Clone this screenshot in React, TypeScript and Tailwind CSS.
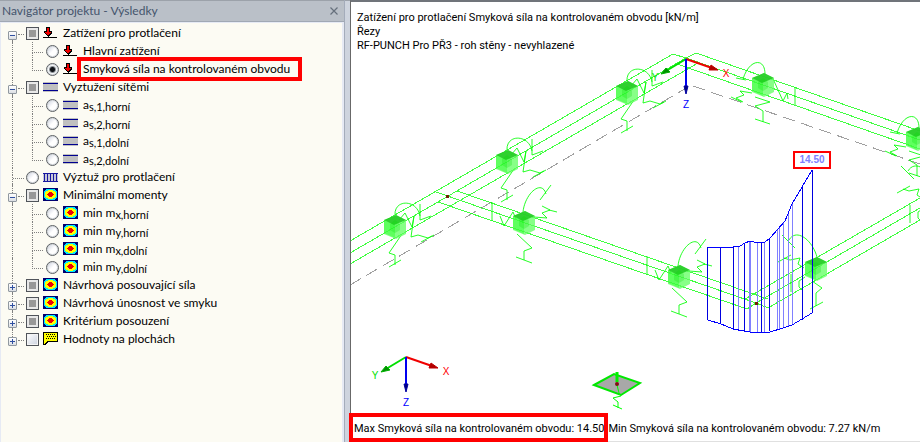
import { useState } from "react";
import type { ReactNode } from "react";

type IconKind = "load" | "mesh" | "stirrups" | "contour" | "values";

interface ResultItem {
  id: string;
  label: string;
  sub?: string;
  icon: IconKind;
}

interface ResultGroup extends ResultItem {
  state: "partial" | "off" | "radio";
  expanded?: boolean;
  items?: ResultItem[];
}

const groups: ResultGroup[] = [
  {
    id: "load",
    label: "Zatížení pro protlačení",
    icon: "load",
    state: "partial",
    expanded: true,
    items: [
      { id: "main-load", label: "Hlavní zatížení", icon: "load" },
      { id: "shear", label: "Smyková síla na kontrolovaném obvodu", icon: "load" },
    ],
  },
  {
    id: "mesh",
    label: "Vyztužení sítěmi",
    icon: "mesh",
    state: "partial",
    expanded: true,
    items: [
      { id: "as1-top", label: "a", sub: "s,1,horní", icon: "mesh" },
      { id: "as2-top", label: "a", sub: "s,2,horní", icon: "mesh" },
      { id: "as1-bottom", label: "a", sub: "s,1,dolní", icon: "mesh" },
      { id: "as2-bottom", label: "a", sub: "s,2,dolní", icon: "mesh" },
    ],
  },
  { id: "stirrups", label: "Výztuž pro protlačení", icon: "stirrups", state: "radio" },
  {
    id: "moments",
    label: "Minimální momenty",
    icon: "contour",
    state: "partial",
    expanded: true,
    items: [
      { id: "mx-top", label: "min m", sub: "x,horní", icon: "contour" },
      { id: "my-top", label: "min m", sub: "y,horní", icon: "contour" },
      { id: "mx-bottom", label: "min m", sub: "x,dolní", icon: "contour" },
      { id: "my-bottom", label: "min m", sub: "y,dolní", icon: "contour" },
    ],
  },
  { id: "shear-design", label: "Návrhová posouvající síla", icon: "contour", state: "partial", expanded: false },
  { id: "shear-capacity", label: "Návrhová únosnost ve smyku", icon: "contour", state: "partial", expanded: false },
  { id: "criterion", label: "Kritérium posouzení", icon: "contour", state: "partial", expanded: false },
  { id: "values", label: "Hodnoty na plochách", icon: "values", state: "off", expanded: false },
];

function TreeIcon({ kind }: { kind: IconKind }) {
  return (
    <svg width="15" height="14" viewBox="0 0 15 14" shapeRendering="crispEdges" className="shrink-0" aria-hidden="true">
      {kind === "load" && (
        <>
          <path d="M3 1h4v4h2v2l-4 4l-4-4V5h2z" fill="#000" />
          <path d="M4 2h2v4h2l-3 3.5L2 6h2z" fill="#f00000" />
          <path d="M0 11h14v1H0z" fill="#000" />
        </>
      )}
      {kind === "mesh" && (
        <>
          <path d="M0 2h15v10H0z" fill="#c0c0c0" />
          <path d="M0 3h15v1H0zM0 10h15v1H0z" fill="#000090" />
        </>
      )}
      {kind === "stirrups" && (
        <>
          <path d="M0 3h15v9H0z" fill="#c8c8d8" />
          <path d="M0 3h15v1H0zM0 11h15v1H0zM1 3h1v9H1zM4 3h1v9H4zM7 3h1v9H7zM10 3h1v9h-1zM13 3h1v9h-1z" fill="#1818a0" />
        </>
      )}
      {kind === "contour" && (
        <>
          <path d="M0 0h15v13H0z" fill="#000070" />
          <path d="M3 1h9v1h1v1h1v7h-1v1h-1v1H3v-1H2v-1H1V3h1V2h1z" fill="#00e8f8" />
          <path d="M5 2h5v1h2v1h1v5h-1v1h-2v1H5v-1H3V9H2V4h1V3h2z" fill="#ffff00" />
          <path d="M6 4h3v1h1v1h1v1h-1v1H9v1H6V8H5V7H4V6h1V5h1z" fill="#f00000" />
        </>
      )}
      {kind === "values" && (
        <>
          <path d="M0 0h15v10H5l-3 3H0z" fill="#000" />
          <path d="M1 1h13v8H4l-3 3z" fill="#ffff00" />
          <path
            d="M3 2h1v1H3zM5 2h1v1H5zM7 2h1v1H7zM9 2h1v1H9zM11 2h1v1h-1zM4 4h1v1H4zM6 4h1v1H6zM8 4h1v1H8zM10 4h1v1h-1zM12 4h1v1h-1zM3 6h1v1H3zM5 6h1v1H5zM7 6h1v1H7zM9 6h1v1H9zM11 6h1v1h-1z"
            fill="#000"
          />
        </>
      )}
    </svg>
  );
}

const radioClass =
  "size-[13px] shrink-0 appearance-none rounded-full border border-[#5c6064] bg-linear-to-br from-[#c8cedc] via-white to-white shadow-[inset_0_0_0_1px_#d4d8dc] checked:bg-[radial-gradient(circle,#101418_0_2px,#8a9096_3px,#f8f9fa_4px)]";

function RootGuide({ group, first, last }: { group: ResultGroup; first: boolean; last: boolean }) {
  const hasChildren = group.expanded !== undefined;
  return (
    <div className="flex h-full w-[26px] shrink-0 pl-2">
      <div className="flex w-[9px] flex-col items-center">
        <span className={`h-[7px] border-l border-dotted ${first ? "border-transparent" : "border-[#808080]"}`} />
        {hasChildren ? (
          <button
            type="button"
            aria-label={`${group.expanded ? "Sbalit" : "Rozbalit"} ${group.label}`}
            className="flex size-[9px] items-center justify-center rounded-[1px] border border-[#9098a0] bg-linear-to-b from-white to-[#dcdfe4]"
          >
            <svg width="5" height="5" viewBox="0 0 5 5" shapeRendering="crispEdges" aria-hidden="true">
              <path d={group.expanded ? "M0 2h5v1H0z" : "M0 2h5v1H0zM2 0h1v5H2z"} fill="#3050a0" />
            </svg>
          </button>
        ) : (
          <span className="h-[9px] border-l border-dotted border-[#808080]" />
        )}
        <span className={`h-[2px] border-l border-dotted ${last ? "border-transparent" : "border-[#808080]"}`} />
      </div>
      <span className={`mt-[10px] h-px border-t border-dotted border-[#808080] ${hasChildren ? "ml-px w-[6px]" : "-ml-1 w-[11px]"}`} />
    </div>
  );
}

function ChildGuide({ last }: { last: boolean }) {
  return (
    <div className="flex h-full w-[46px] shrink-0 pl-3">
      <span className="w-5 border-l border-dotted border-[#808080]" />
      <span className="h-[11px] w-[11px] border-b border-l border-dotted border-[#808080]" />
      {!last && <span className="mt-[11px] -ml-[11px] border-l border-dotted border-[#808080]" />}
    </div>
  );
}

function Highlight({ children, className }: { children: ReactNode; className: string }) {
  return (
    <span className="relative">
      {children}
      <span className={`pointer-events-none absolute border-4 border-[#ff0000] ${className}`} />
    </span>
  );
}

function Label({ item }: { item: ResultItem }) {
  return (
    <>
      {item.label}
      {item.sub && <span className="relative top-[2px] text-[11px]">{item.sub}</span>}
    </>
  );
}

function Navigator() {
  const [selected, setSelected] = useState("shear");

  return (
    <aside className="flex w-[345px] shrink-0 flex-col border-r border-[#a4acba] bg-[#e6eaf4]">
      <div className="flex h-[22px] items-center justify-between border-t border-b border-t-[#9ca2aa] border-b-[#a0a8b4] bg-[#bac0c8] pr-1 pl-[2px] text-[#44546c]">
        <h1>Navigátor projektu - Výsledky</h1>
        <button type="button" aria-label="Zavřít" className="flex size-3 items-center justify-center">
          <svg width="8" height="8" viewBox="0 0 8 8" aria-hidden="true">
            <path d="M0.5 0.5l7 7M7.5 0.5l-7 7" stroke="#66707c" strokeWidth="1.2" />
          </svg>
        </button>
      </div>
      <ul className="mr-[2px] ml-px mt-px flex-1 bg-[#fcfbf3] pt-px text-black">
        {groups.map((group, gi) => (
          <li key={group.id} className="-ml-px">
            <div className="flex h-[18px] items-center">
              <RootGuide group={group} first={gi === 0} last={gi === groups.length - 1} />
              <label className="flex items-center">
                {group.state === "radio" ? (
                  <input
                    type="radio"
                    name="result"
                    checked={selected === group.id}
                    onChange={() => setSelected(group.id)}
                    className={radioClass}
                  />
                ) : (
                  <input
                    type="checkbox"
                    defaultChecked={group.state === "partial"}
                    className="size-[13px] shrink-0 appearance-none border border-[#50545a] bg-linear-to-br from-white to-[#ccd2de] shadow-[inset_0_0_0_1px_#f4f4f4] checked:bg-none checked:bg-[#989898] checked:shadow-[inset_0_0_0_2px_#e8e8e8]"
                  />
                )}
                <span className="ml-1 flex items-center gap-[5px] whitespace-nowrap">
                  <TreeIcon kind={group.icon} />
                  <span>{group.label}</span>
                </span>
              </label>
            </div>
            {group.expanded && (
              <ul>
                {group.items?.map((item, i) => (
                  <li key={item.id} className="flex h-[18px] items-center">
                    <ChildGuide last={i === (group.items?.length ?? 0) - 1} />
                    <label className="flex items-center">
                      <input
                        type="radio"
                        name="result"
                        checked={selected === item.id}
                        onChange={() => setSelected(item.id)}
                        className={radioClass}
                      />
                      <span className="ml-1 flex items-center gap-[5px] whitespace-nowrap">
                        <TreeIcon kind={item.icon} />
                        {item.id === "shear" ? (
                          <Highlight className="-inset-y-[3px] -right-3 -left-[6px]">
                            <Label item={item} />
                          </Highlight>
                        ) : (
                          <span>
                            <Label item={item} />
                          </span>
                        )}
                      </span>
                    </label>
                  </li>
                ))}
              </ul>
            )}
          </li>
        ))}
      </ul>
    </aside>
  );
}

// Global axes, drawn from their origin
function Axes({ x, y }: { x: number; y: number }) {
  return (
    <g transform={`translate(${x} ${y})`} fontSize="10" textAnchor="middle">
      <path d="M0 0L-20 12" stroke="#00e000" strokeWidth="2" />
      <path d="M-25 15l5-6l4 4z" fill="#009000" stroke="#00b000" />
      <path d="M0 0L26 9" stroke="#f00000" strokeWidth="2" />
      <path d="M32 11l-7-5l-2 5z" fill="#b00000" stroke="#c00000" />
      <path d="M0 0V28" stroke="#0000f0" strokeWidth="2" />
      <path d="M0 35l-2-8h4z" fill="#000080" stroke="#0000a0" />
      <text x="-31" y="22" fill="#00e000">Y</text>
      <text x="40" y="18" fill="#ff0000">X</text>
      <text x="0" y="49" fill="#0000ff">Z</text>
    </g>
  );
}

// Spring symbols around a line support, one set per edge direction
const springs = {
  left: "M0-12C-1-28 22-28 25-11M25-23v16l11-4M4-7l6-7l7 14l2-11l-3 21l7-2l10 3l4-2M26 15l13-7M7 7L-6 26l6 2v10M-6 40l12-7",
  front: "M-1-11C1-30 18-44 22-29M16-23l11-15M10-6l13 1l-5-5l8-3l-8-4M25-13l8 2M-32-21v19M-24-7l4 10l9-14l3 7M-7 11l15 14l-8 3v9M-8 34l16 6",
  back: "M-20-6C-14-26 2-28 2-11M-27-7l10 2M11-4l9 20l4-8l1 6M32 2v18M-11 8l-12-2l4 4l-8 3l7 4M-32 12l11 5M-8 12l15 5l-15 4l8 5v11M-8 34l15 5",
  right: "M1-12C-4-30-20-41-27-29M-34-34l13 13M-38-7l13-7M-32-11l6 2l10-2l-2 6l6 4M-25 5v18M-17 18v-6l6-4M-17 18l4 4M-4 12l10 7l-6 5v13M-6 40l13-7",
};

const supports: { kind: keyof typeof springs; x: number; y: number }[] = [
  { kind: "left", x: 395, y: 228 },
  { kind: "left", x: 507, y: 163 },
  { kind: "left", x: 627, y: 94 },
  { kind: "front", x: 524, y: 224 },
  { kind: "front", x: 679, y: 278 },
  { kind: "back", x: 763, y: 86 },
  { kind: "back", x: 917, y: 140 },
  { kind: "right", x: 816, y: 270 },
  { kind: "right", x: 935, y: 201 },
];

function Support({ kind, x, y }: { kind: keyof typeof springs; x: number; y: number }) {
  return (
    <g transform={`translate(${x} ${y})`}>
      <path d={springs[kind]} stroke="#00ff00" strokeOpacity="0.85" fill="none" />
      <path d="M-11-7L1-12l10 5v14L1 12l-12-5z" fill="#60ff60" fillOpacity="0.75" />
      <path d="M-11-7L0-2v13l-11-5z" fill="#00ff00" fillOpacity="0.3" />
      <path d="M-11-7L1-12l10 5L-1-2z" fill="#20c820" fillOpacity="0.85" />
      <path d="M0-7l5 4v6l-5 3l-5-3v-6z" fill="#00e000" fillOpacity="0.25" />
    </g>
  );
}

const darkOrdinates = [
  [708, 248, 321], [721, 249, 325], [734, 248, 330], [745, 245, 332], [762, 244, 333],
  [770, 239, 332], [803, 188, 321], [813, 171, 314],
];
const lightOrdinates = [
  [738, 247, 331], [749, 243, 333], [750, 243, 333], [757, 244, 333], [764, 243, 333], [777, 231, 331],
  [779, 229, 330], [783, 223, 329], [788, 214, 327], [792, 205, 325],
];

function Model() {
  return (
    <svg
      viewBox="351 3 569 439"
      preserveAspectRatio="xMinYMin slice"
      className="absolute inset-0 size-full font-['Liberation_Sans',Arial,sans-serif]"
      role="img"
      aria-label="Model"
    >
      <g fill="none" shapeRendering="crispEdges">
        <path
          d="M350 286L688 88M693 87L920 165"
          stroke="#a0a0a0"
          strokeDasharray="13 6"
        />
        <path
          d="M350 242L673 55l13 4M350 254L686 59M350 265L698 64M686 59l10-5L920 132M686 59L920 141M677 65L920 150M457 192L768 300M436 193L756 304M438 203L747 310l9-6M768 309l-12-5l-11-4L920 199M756 304L920 209M768 309L920 221"
          stroke="#00ff00"
          strokeOpacity="0.75"
        />
      </g>
      {supports.map((s) => (
        <Support key={`${s.x}-${s.y}`} {...s} />
      ))}

      <g shapeRendering="crispEdges" fill="none">
        {lightOrdinates.map(([x, top, bottom]) => (
          <path key={x} d={`M${x + 0.5} ${top}V${bottom}`} stroke="#8080ff" />
        ))}
        {darkOrdinates.map(([x, top, bottom]) => (
          <path key={x} d={`M${x - 0.5} ${top}V${bottom}`} stroke="#0000e0" />
        ))}
        <path
          d="M708 248l13 1l12-1l7-1l5-3l5-2l8 2l7-1l5-4l8-9l7-8l7-17l10-17l10-17M708 321l13 4l12 5l11 2l6 1h20l13-4l9-3l10-6l10-6"
          stroke="#0000ff"
        />
      </g>

      <rect x="446" y="196" width="3" height="3" fill="#702000" />
      <rect x="755" y="303" width="3" height="3" fill="#702000" />

      <rect x="794" y="153" width="36" height="16" fill="#fff" stroke="#ff0000" strokeWidth="2" />
      <text x="812" y="164" fontSize="10" fontWeight="bold" textAnchor="middle" fill="#8080ff">14.50</text>

      <path d="M594 386l20-11l26 9l-19 12z" fill="#a8a8a8" stroke="#00e800" strokeWidth="2" />
      <path d="M617 373v10" stroke="#00f000" strokeWidth="3" />
      <path d="M617 386l2 8l2 3l-8 2l5 4v6M613 406l9 4" stroke="#00ff00" fill="none" />
      <circle cx="617" cy="385" r="2" fill="#801010" />

      <Axes x={686} y={60} />
      <Axes x={406} y={358} />
    </svg>
  );
}

function Viewport() {
  return (
    <main className="relative flex min-w-0 flex-1 flex-col justify-between border-t-2 border-b border-l border-t-[#70747a] border-b-[#e0e0e0] border-l-[#686868] bg-white font-[Roboto,'Liberation_Sans',sans-serif] text-[11px] leading-[14px] whitespace-nowrap text-black">
      <Model />
      <div className="relative pt-[9px] pl-[6px]">
        <p>Zatížení pro protlačení Smyková síla na kontrolovaném obvodu [kN/m]</p>
        <p>Řezy</p>
        <p>RF-PUNCH Pro PŘ3 - roh stěny - nevyhlazené</p>
      </div>
      <div className="relative flex gap-1 pb-[5px] pl-[3px]">
        <Highlight className="-top-[9px] -right-1 -bottom-[6px] -left-[5px]">
          Max Smyková síla na kontrolovaném obvodu: 14.50
        </Highlight>
        <span>Min Smyková síla na kontrolovaném obvodu: 7.27 kN/m</span>
      </div>
    </main>
  );
}

export default function App() {
  return (
    <div className="flex h-screen min-h-[400px] overflow-hidden bg-[#ced4de] font-[Lato,'Open_Sans',sans-serif] text-[12px] leading-[18px]">
      <Navigator />
      <div className="w-[5px] shrink-0 border-t border-[#9ca2aa]" />
      <Viewport />
    </div>
  );
}
